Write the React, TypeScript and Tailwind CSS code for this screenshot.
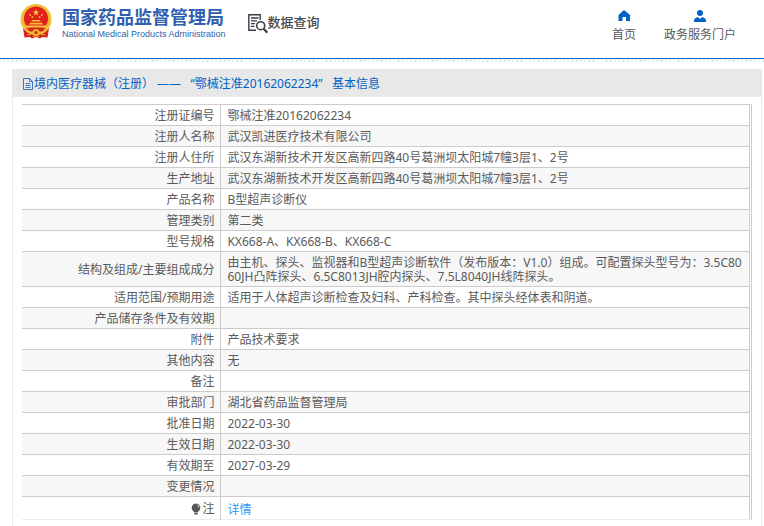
import React from "react";

const uiFont = "font-['Noto_Sans','Noto_Sans_CJK_SC',sans-serif]";

type Row = { label: string; value: string };

const rows: Row[] = [
  { label: "注册证编号", value: "鄂械注准20162062234" },
  { label: "注册人名称", value: "武汉凯进医疗技术有限公司" },
  { label: "注册人住所", value: "武汉东湖新技术开发区高新四路40号葛洲坝太阳城7幢3层1、2号" },
  { label: "生产地址", value: "武汉东湖新技术开发区高新四路40号葛洲坝太阳城7幢3层1、2号" },
  { label: "产品名称", value: "B型超声诊断仪" },
  { label: "管理类别", value: "第二类" },
  { label: "型号规格", value: "KX668-A、KX668-B、KX668-C" },
  {
    label: "结构及组成/主要组成成分",
    value:
      "由主机、探头、监视器和B型超声诊断软件（发布版本：V1.0）组成。可配置探头型号为：3.5C8060JH凸阵探头、6.5C8013JH腔内探头、7.5L8040JH线阵探头。",
  },
  { label: "适用范围/预期用途", value: "适用于人体超声诊断检查及妇科、产科检查。其中探头经体表和阴道。" },
  { label: "产品储存条件及有效期", value: "" },
  { label: "附件", value: "产品技术要求" },
  { label: "其他内容", value: "无" },
  { label: "备注", value: "" },
  { label: "审批部门", value: "湖北省药品监督管理局" },
  { label: "批准日期", value: "2022-03-30" },
  { label: "生效日期", value: "2022-03-30" },
  { label: "有效期至", value: "2027-03-29" },
  { label: "变更情况", value: "" },
];

function Emblem() {
  return (
    <svg className="h-9 w-8" viewBox="0 0 32 36" aria-hidden="true">
      <path d="M3 24 L10 29 L22 29 L29 24 L27.5 33.5 L22 33 L20 34.5 L16 33 L12 34.5 L10 33 L4.5 33.5 Z" fill="#d9231c" />
      <circle cx="16" cy="15.5" r="15.5" fill="#efb52d" />
      <circle cx="16" cy="15.5" r="14.4" fill="none" stroke="#f8d25a" strokeWidth="1" strokeDasharray="2 1" />
      <circle cx="16" cy="14.5" r="12" fill="#e0221b" />
      <path d="M16 5 L16.8 7.4 L19.2 7.5 L17.3 9 L18 11.4 L16 10 L14 11.4 L14.7 9 L12.8 7.5 L15.2 7.4 Z" fill="#f8cf4a" />
      <g fill="#f5bd3c">
        <circle cx="10" cy="11" r=".9" />
        <circle cx="12.3" cy="13" r=".9" />
        <circle cx="19.7" cy="13" r=".9" />
        <circle cx="22" cy="11" r=".9" />
        <path d="M11 17.5 L12.5 16 H19.5 L21 17.5 Z" />
        <path d="M9 20.5 L10 18.8 H22 L23 20.5 Z" />
        <path d="M5 21.5 H27 L26 23.5 H6 Z" />
      </g>
      <path d="M6 24.2 H26 L22 27.5 H10 Z" fill="#d9231c" />
      <circle cx="16" cy="28.5" r="3.6" fill="#efb52d" />
      <circle cx="16" cy="28.5" r="1.6" fill="#d9231c" />
      <path d="M7 31 L12 29.5 M25 31 L20 29.5 M13 33 L16 31.5 L19 33" stroke="#f3b733" strokeWidth="1" fill="none" />
    </svg>
  );
}

function QueryIcon() {
  return (
    <svg className="h-5 w-5" viewBox="0 0 20 20" fill="none" stroke="#3a3d48" aria-hidden="true">
      <path d="M8 16.2 H.8 V.8 H12.2 V6" strokeWidth="1.4" />
      <path d="M3 4 H10.5 M3 6.8 H9 M3 9.6 H7 M3 12.4 H6.5" strokeWidth="1.3" />
      <circle cx="12.7" cy="11.7" r="4" strokeWidth="1.6" />
      <path d="M15.7 14.8 L19.3 18.7" strokeWidth="2.2" />
    </svg>
  );
}

function HomeIcon() {
  return (
    <svg className="h-3 w-3" viewBox="0 0 12 12" fill="#0062c4" aria-hidden="true">
      <path d="M6 0 L12 5 V11 H8 V7 H4.5 V11 H.5 V5 Z" />
    </svg>
  );
}

function UserIcon() {
  return (
    <svg className="h-3 w-3" viewBox="0 0 12 12" fill="#0062c4" aria-hidden="true">
      <circle cx="6" cy="3" r="3" />
      <path d="M0 12 V10 Q.5 8 3.8 7 L6 9 L8.2 7 Q11.5 8 12 10 V12 Z" />
    </svg>
  );
}

function FileIcon() {
  return (
    <svg className="h-3 w-3" viewBox="0 0 12 12" fill="none" stroke="#3a74c4" aria-hidden="true">
      <path d="M1.5 .5 H7.5 L10.5 3.5 V11.5 H1.5 Z M7.5 .5 V3.5 H10.5" />
      <path d="M3.5 5.5 H8.5 M3.5 7.5 H8.5 M3.5 9.5 H8.5" />
    </svg>
  );
}

function BulbIcon() {
  return (
    <svg className="h-3 w-2.5" viewBox="0 0 10 12" fill="#555555" aria-hidden="true">
      <path d="M5 .5 A4.3 4.3 0 0 1 7.6 8.2 L6.8 9.5 H3.2 L2.4 8.2 A4.3 4.3 0 0 1 5 .5 Z" />
      <rect x="3.3" y="10" width="3.4" height="1.5" />
      <path d="M6 2 Q7.8 2.5 7.9 4.4" stroke="#ffffff" strokeWidth=".8" fill="none" />
    </svg>
  );
}

export default function App() {
  return (
    <div className={`flex min-h-screen flex-col bg-white text-xs text-[#5a5a5a] ${uiFont}`}>
      <header className="flex h-[58px] items-start justify-between pr-7 pl-5">
        <div className="flex items-start gap-[22px]">
          <a href="#" className="flex items-start gap-2.5 pt-1 text-[#2f5fae]">
            <Emblem />
            <span className="flex flex-col pt-1">
              <span className="text-lg leading-[18px] font-bold whitespace-nowrap">国家药品监督管理局</span>
              <span className="pt-0.5 font-['Liberation_Sans',sans-serif] text-[9px] leading-3 whitespace-nowrap">
                National Medical Products Administration
              </span>
            </span>
          </a>
          <a href="#" className="flex items-start pt-3 text-[13px] leading-5 font-medium whitespace-nowrap text-[#4a4a4a]">
            <span className="pt-0.5">
              <QueryIcon />
            </span>
            数据查询
          </a>
        </div>
        <nav className="flex gap-7 pt-2.5">
          <a href="#" className="flex flex-col items-center gap-[5px] whitespace-nowrap">
            <HomeIcon />
            <span className="leading-4">首页</span>
          </a>
          <a href="#" className="flex flex-col items-center gap-[5px] whitespace-nowrap">
            <UserIcon />
            <span className="leading-4">政务服务门户</span>
          </a>
        </nav>
      </header>
      <div className="h-px bg-[#0062c4]" />
      <div className="mt-px h-0.5 bg-[repeating-linear-gradient(135deg,#dedede_0px,#dedede_1px,#ffffff_1px,#ffffff_3px)]" />

      <main className="mt-[7px] mr-0.5 ml-3 flex-1 border-x border-[#eaeaf2]">
        <h1 className="-mx-px flex h-7 items-center border-b border-[#eaeaf2] bg-[#e8e8e8] pt-0.5 pl-2.5 leading-5 font-normal whitespace-pre text-[#0062c4]">
          <FileIcon />
          {"境内医疗器械（注册） ——   “鄂械注准20162062234”   基本信息"}
        </h1>
        <div className="mt-[7px] mr-[9px] ml-[9px] border-r border-[#cacad0] pr-px">
          <table className="w-full table-fixed border-collapse border-t border-r border-[#cccccc]">
            <colgroup>
              <col className="w-[198px]" />
              <col />
            </colgroup>
            <tbody className="leading-[14px]">
              {rows.map((row) => (
                <tr key={row.label} className="h-[21px] border-b border-[#cccccc] even:bg-[#f7f7f7]">
                  <th scope="row" className="border-r border-[#cccccc] pt-1 pr-[5px] pb-0.5 text-right font-normal">
                    {row.label}
                  </th>
                  <td className="pt-1 pr-1.5 pb-0.5 pl-[7px] break-all">{row.value}</td>
                </tr>
              ))}
              <tr className="h-[23px] border-b border-[#eaeaf2]">
                <th scope="row" className="border-r border-[#cccccc] pt-[5px] pr-[5px] pb-[3px] font-normal">
                  <span className="flex items-center justify-end gap-px">
                    <BulbIcon />注
                  </span>
                </th>
                <td className="pt-1.5 pr-1.5 pb-0.5 pl-[7px]">
                  <a href="#" className="text-[#3296fa]">
                    详情
                  </a>
                </td>
              </tr>
            </tbody>
          </table>
        </div>
      </main>
    </div>
  );
}
